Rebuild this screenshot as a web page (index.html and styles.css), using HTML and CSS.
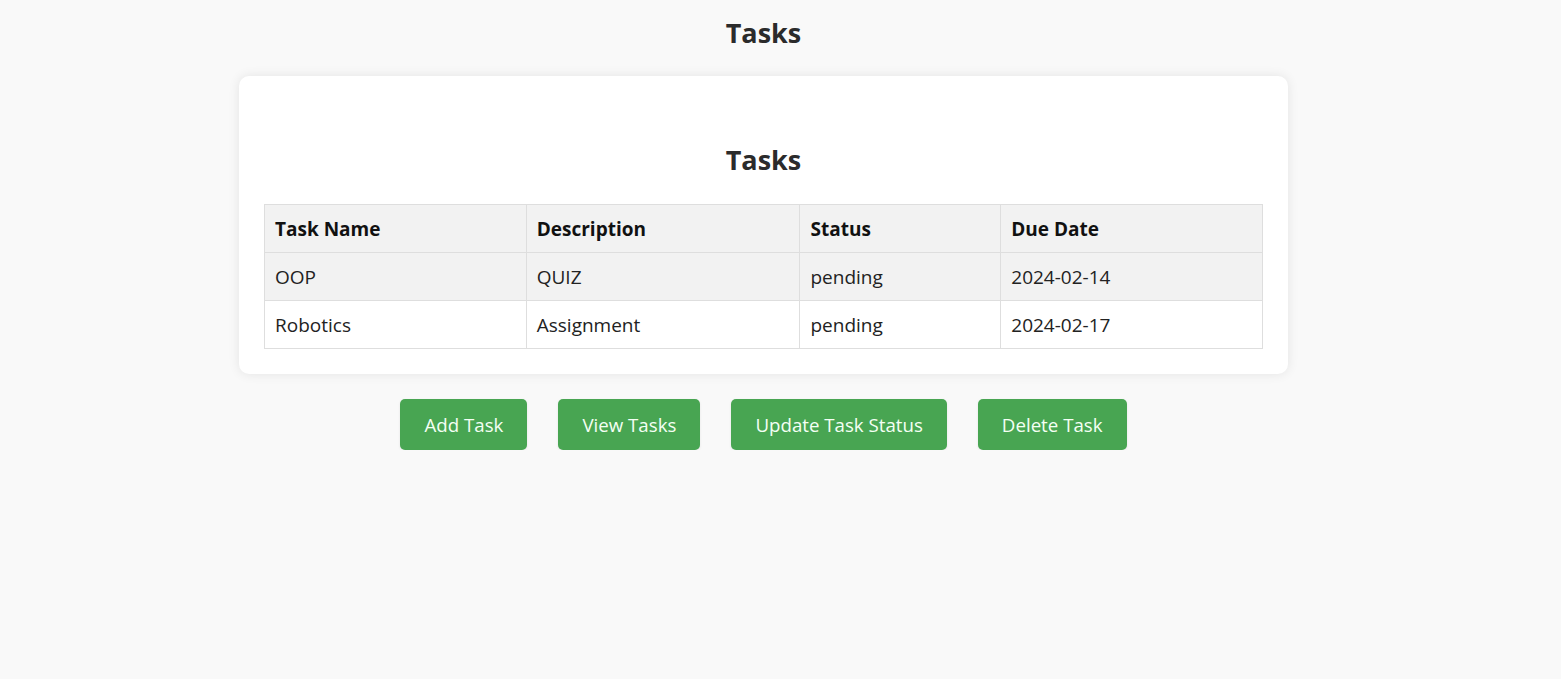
FILE: index.html
```html
<!DOCTYPE html>
<html lang="en">
<head>
<meta charset="utf-8">
<title>Tasks</title>
<link rel="stylesheet" href="styles.css">
</head>
<body>
<div class="page">
  <h1 class="title">Tasks</h1>
  <div class="card">
    <h2 class="card-title">Tasks</h2>
    <table class="tasks">
      <colgroup>
        <col class="c1"><col class="c2"><col class="c3"><col class="c4">
      </colgroup>
      <tr class="head"><th>Task Name</th><th>Description</th><th>Status</th><th>Due Date</th></tr>
      <tr class="alt"><td>OOP</td><td>QUIZ</td><td>pending</td><td>2024-02-14</td></tr>
      <tr><td>Robotics</td><td>Assignment</td><td>pending</td><td>2024-02-17</td></tr>
    </table>
  </div>
  <div class="actions">
    <button class="btn">Add Task</button>
    <button class="btn">View Tasks</button>
    <button class="btn">Update Task Status</button>
    <button class="btn">Delete Task</button>
  </div>
</div>
</body>
</html>
```
FILE: styles.css
```css
html, body {
  margin: 0;
  padding: 0;
  background: #f9f9f9;
}
body {
  font-family: "Open Sans", "Noto Sans", sans-serif;
  color: #222;
}
.page {
  width: 1527px;
  display: flex;
  flex-direction: column;
  align-items: center;
}
.title {
  margin: 14px 0 0;
  height: 38px;
  line-height: 38px;
  font-size: 27px;
  font-weight: 700;
  color: #2b2b2b;
}
.card {
  margin-top: 24px;
  width: 1049px;
  box-sizing: border-box;
  background: #fff;
  border-radius: 10px;
  box-shadow: 0 0 12px rgba(0, 0, 0, 0.09);
  padding: 0 25px 25px;
}
.card-title {
  margin: 65px 0 25px;
  height: 38px;
  line-height: 38px;
  text-align: center;
  font-size: 27px;
  font-weight: 700;
  color: #2b2b2b;
}
.tasks {
  width: 100%;
  border-collapse: collapse;
  font-size: 19px;
}
.c1 { width: 262px; }
.c2 { width: 274px; }
.c3 { width: 201px; }
.c4 { width: 262px; }
.tasks th, .tasks td {
  border: 1px solid #dedede;
  height: 47px;
  padding: 0 10px;
  text-align: left;
  vertical-align: middle;
}
.tasks th {
  font-weight: 700;
  color: #111;
}
.head, .alt {
  background: #f2f2f2;
}
.actions {
  margin-top: 25px;
  display: flex;
  gap: 31px;
}
.btn {
  font-family: inherit;
  font-size: 18.7px;
  height: 51px;
  padding: 0 24px;
  border: none;
  border-radius: 5px;
  background: #48a552;
  color: #f4fff4;
  box-shadow: 0 1px 3px rgba(0, 0, 0, 0.08);
}
```
